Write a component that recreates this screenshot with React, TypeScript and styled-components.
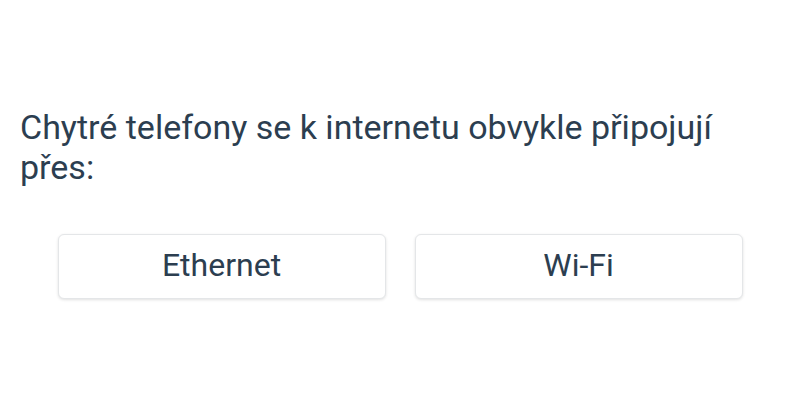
import React from "react";
import styled, { createGlobalStyle } from "styled-components";

const Global = createGlobalStyle`
  html, body { margin: 0; padding: 0; background: #ffffff; }
  body { font-family: Roboto, "Noto Sans", sans-serif; }
`;

const Page = styled.div`
  width: 800px;
  height: 400px;
  box-sizing: border-box;
  padding: 107px 20px 0 20px;
  display: flex;
  flex-direction: column;
`;

const Question = styled.p`
  margin: 0;
  font-size: 34px;
  line-height: 40px;
  color: #2c3e50;
  font-weight: 400;
`;

const Options = styled.div`
  display: grid;
  grid-template-columns: 328px 328px;
  justify-content: center;
  column-gap: 29px;
  margin-top: 47px;
`;

const OptionButton = styled.button`
  height: 65px;
  background: #ffffff;
  border: 1px solid #e4e6e8;
  border-radius: 6px;
  box-shadow: 0 1px 3px rgba(0, 0, 0, 0.12);
  font-family: Roboto, "Noto Sans", sans-serif;
  font-size: 32px;
  color: #2c3e50;
  cursor: pointer;
  padding: 0 0 3px 0;
`;

export default function App() {
  return (
    <>
      <Global />
      <Page>
        <Question>Chytré telefony se k internetu obvykle připojují přes:</Question>
        <Options>
          <OptionButton>Ethernet</OptionButton>
          <OptionButton>Wi-Fi</OptionButton>
        </Options>
      </Page>
    </>
  );
}
